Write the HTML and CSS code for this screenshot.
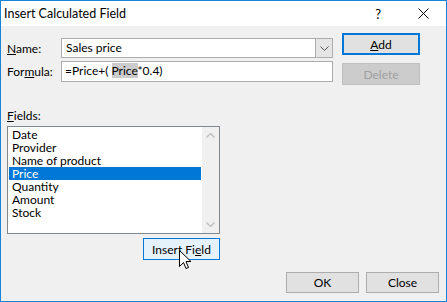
FILE: index.html
```html
<!DOCTYPE html>
<html lang="en">
  <head>
    <meta charset="UTF-8" />
    <title>Insert Calculated Field</title>
    <link rel="stylesheet" href="styles.css">
  </head>
  <body>
    <div class="dialog">
      <div class="titlebar">
        <span class="title">Insert Calculated Field</span>
        <span class="help">?</span>
        <svg class="close-x" width="11" height="11" viewBox="0 0 11 11">
          <path d="M0.5 0.5 L10.5 10.5 M10.5 0.5 L0.5 10.5" stroke="#000" stroke-width="1" fill="none" />
        </svg>
      </div>

      <div class="content">
        <div class="top">
          <div class="fields-form">
            <div class="form-row name-row">
              <label class="lbl"><u>N</u>ame:</label>
              <div class="combo">
                <span class="combo-text">Sales price</span>
                <span class="combo-btn">
                  <svg width="9" height="5" viewBox="0 0 9 5">
                    <path d="M0.5 0.5 L4.5 4.5 L8.5 0.5" stroke="#555" fill="none" />
                  </svg>
                </span>
              </div>
            </div>
            <div class="form-row formula-row">
              <label class="lbl">For<u>m</u>ula:</label>
              <div class="textbox">=Price+( <span class="sel">Price</span>*0.4)</div>
            </div>
          </div>
          <div class="side-buttons">
            <div class="btn btn-default"><u>A</u>dd</div>
            <div class="btn btn-disabled">Delete</div>
          </div>
        </div>

        <div class="fields-block">
          <div class="lbl"><u>F</u>ields:</div>
          <div class="listbox">
            <ul class="items">
              <li>Date</li>
              <li>Provider</li>
              <li>Name of product</li>
              <li class="selected">Price</li>
              <li>Quantity</li>
              <li>Amount</li>
              <li>Stock</li>
            </ul>
            <div class="scrollbar">
              <svg width="9" height="5" viewBox="0 0 9 5">
                <path d="M0.5 4.5 L4.5 0.5 L8.5 4.5" stroke="#c2c2c2" stroke-width="1.5" fill="none" />
              </svg>
              <svg width="9" height="5" viewBox="0 0 9 5">
                <path d="M0.5 0.5 L4.5 4.5 L8.5 0.5" stroke="#c2c2c2" stroke-width="1.5" fill="none" />
              </svg>
            </div>
          </div>
          <div class="insert-row">
            <div class="btn btn-hover">Insert Fi<u>e</u>ld</div>
            <!-- mouse pointer over the button -->
            <svg class="cursor" width="13" height="20" viewBox="0 0 13 20">
              <path d="M0.5 0.5 L0.5 16.5 L4.5 12.5 L7 18.5 L9.5 17.5 L7 11.5 L12 11.5 Z" fill="#fff" stroke="#000" stroke-width="1" />
            </svg>
          </div>
        </div>

        <div class="bottom-buttons">
          <div class="btn">OK</div>
          <div class="btn">Close</div>
        </div>
      </div>
    </div>
  </body>
</html>
```

FILE: styles.css
```css
* {
  margin: 0;
  padding: 0;
  box-sizing: border-box;
}

body {
  font-family: Lato, "Noto Sans", sans-serif;
  font-size: 12px;
  color: #000;
  background: #f0f0f0;
}

.dialog {
  width: 447px;
  height: 302px;
  border: 1px solid #1883d7;
  background: #f0f0f0;
  display: flex;
  flex-direction: column;
}

.titlebar {
  height: 25px;
  background: #fff;
  display: flex;
  align-items: center;
  padding-left: 3px;
}

.title {
  flex: 1;
  font-size: 12.5px;
}

.help {
  margin-right: 37px;
  font-size: 13px;
}

.close-x {
  margin-right: 17px;
}

.content {
  flex: 1;
  display: flex;
  flex-direction: column;
  padding: 0 7px 0 6px;
}

.lbl u,
.btn u {
  text-decoration: underline;
}

/* top section: name / formula + add / delete */
.top {
  display: flex;
}

.fields-form {
  padding-top: 12px;
  width: 326px;
}

.form-row {
  display: flex;
  align-items: center;
}

.form-row .lbl {
  width: 54px;
}

.name-row {
  height: 20px;
}

.formula-row {
  height: 21px;
  margin-top: 3px;
}

.combo {
  flex: 1;
  height: 20px;
  display: flex;
  border: 1px solid #adadad;
  background: #fff;
}

.combo-text {
  flex: 1;
  padding-left: 4px;
  line-height: 17px;
}

.combo-btn {
  width: 17px;
  background: #e5e5e5;
  border-left: 1px solid #adadad;
  display: flex;
  align-items: center;
  justify-content: center;
}

.textbox {
  flex: 1;
  height: 21px;
  border: 1px solid #adadad;
  background: #fff;
  padding-left: 3px;
  line-height: 18px;
}

.sel {
  background: #cccccc;
}

.side-buttons {
  margin-left: 9px;
  padding-top: 7px;
  display: flex;
  flex-direction: column;
  gap: 8px;
}

.btn {
  width: 78px;
  height: 22px;
  border: 1px solid #adadad;
  background: #e1e1e1;
  display: flex;
  align-items: center;
  justify-content: center;
}

.btn-default {
  border: 2px solid #0078d7;
}

.btn-disabled {
  background: #cccccc;
  border-color: #bfbfbf;
  color: #a0a0a0;
}

.btn-hover {
  width: 77px;
  height: 22px;
  border-color: #0078d7;
  background: #e5f1fb;
}

/* fields list */
.fields-block {
  margin-top: 23px;
  width: 213px;
}

.fields-block > .lbl {
  line-height: 16px;
  margin-bottom: 2px;
}

.listbox {
  height: 108px;
  border: 1px solid #828790;
  background: #fff;
  display: flex;
}

.items {
  flex: 1;
  list-style: none;
  padding: 1px 1px 0 1px;
}

.items li {
  height: 13px;
  line-height: 13px;
  padding-left: 3px;
}

.items li.selected {
  background: #0078d7;
  color: #fff;
}

.scrollbar {
  width: 17px;
  background: #f0f0f0;
  display: flex;
  flex-direction: column;
  justify-content: space-between;
  align-items: center;
  padding: 6px 0 6px;
}

.insert-row {
  position: relative;
  display: flex;
  justify-content: flex-end;
  margin-top: 4px;
}

.cursor {
  position: absolute;
  left: 172px;
  top: 12px;
}

.bottom-buttons {
  display: flex;
  justify-content: flex-end;
  gap: 7px;
  margin-top: 12px;
}

.bottom-buttons .btn {
  width: 73px;
  height: 21px;
}
```
